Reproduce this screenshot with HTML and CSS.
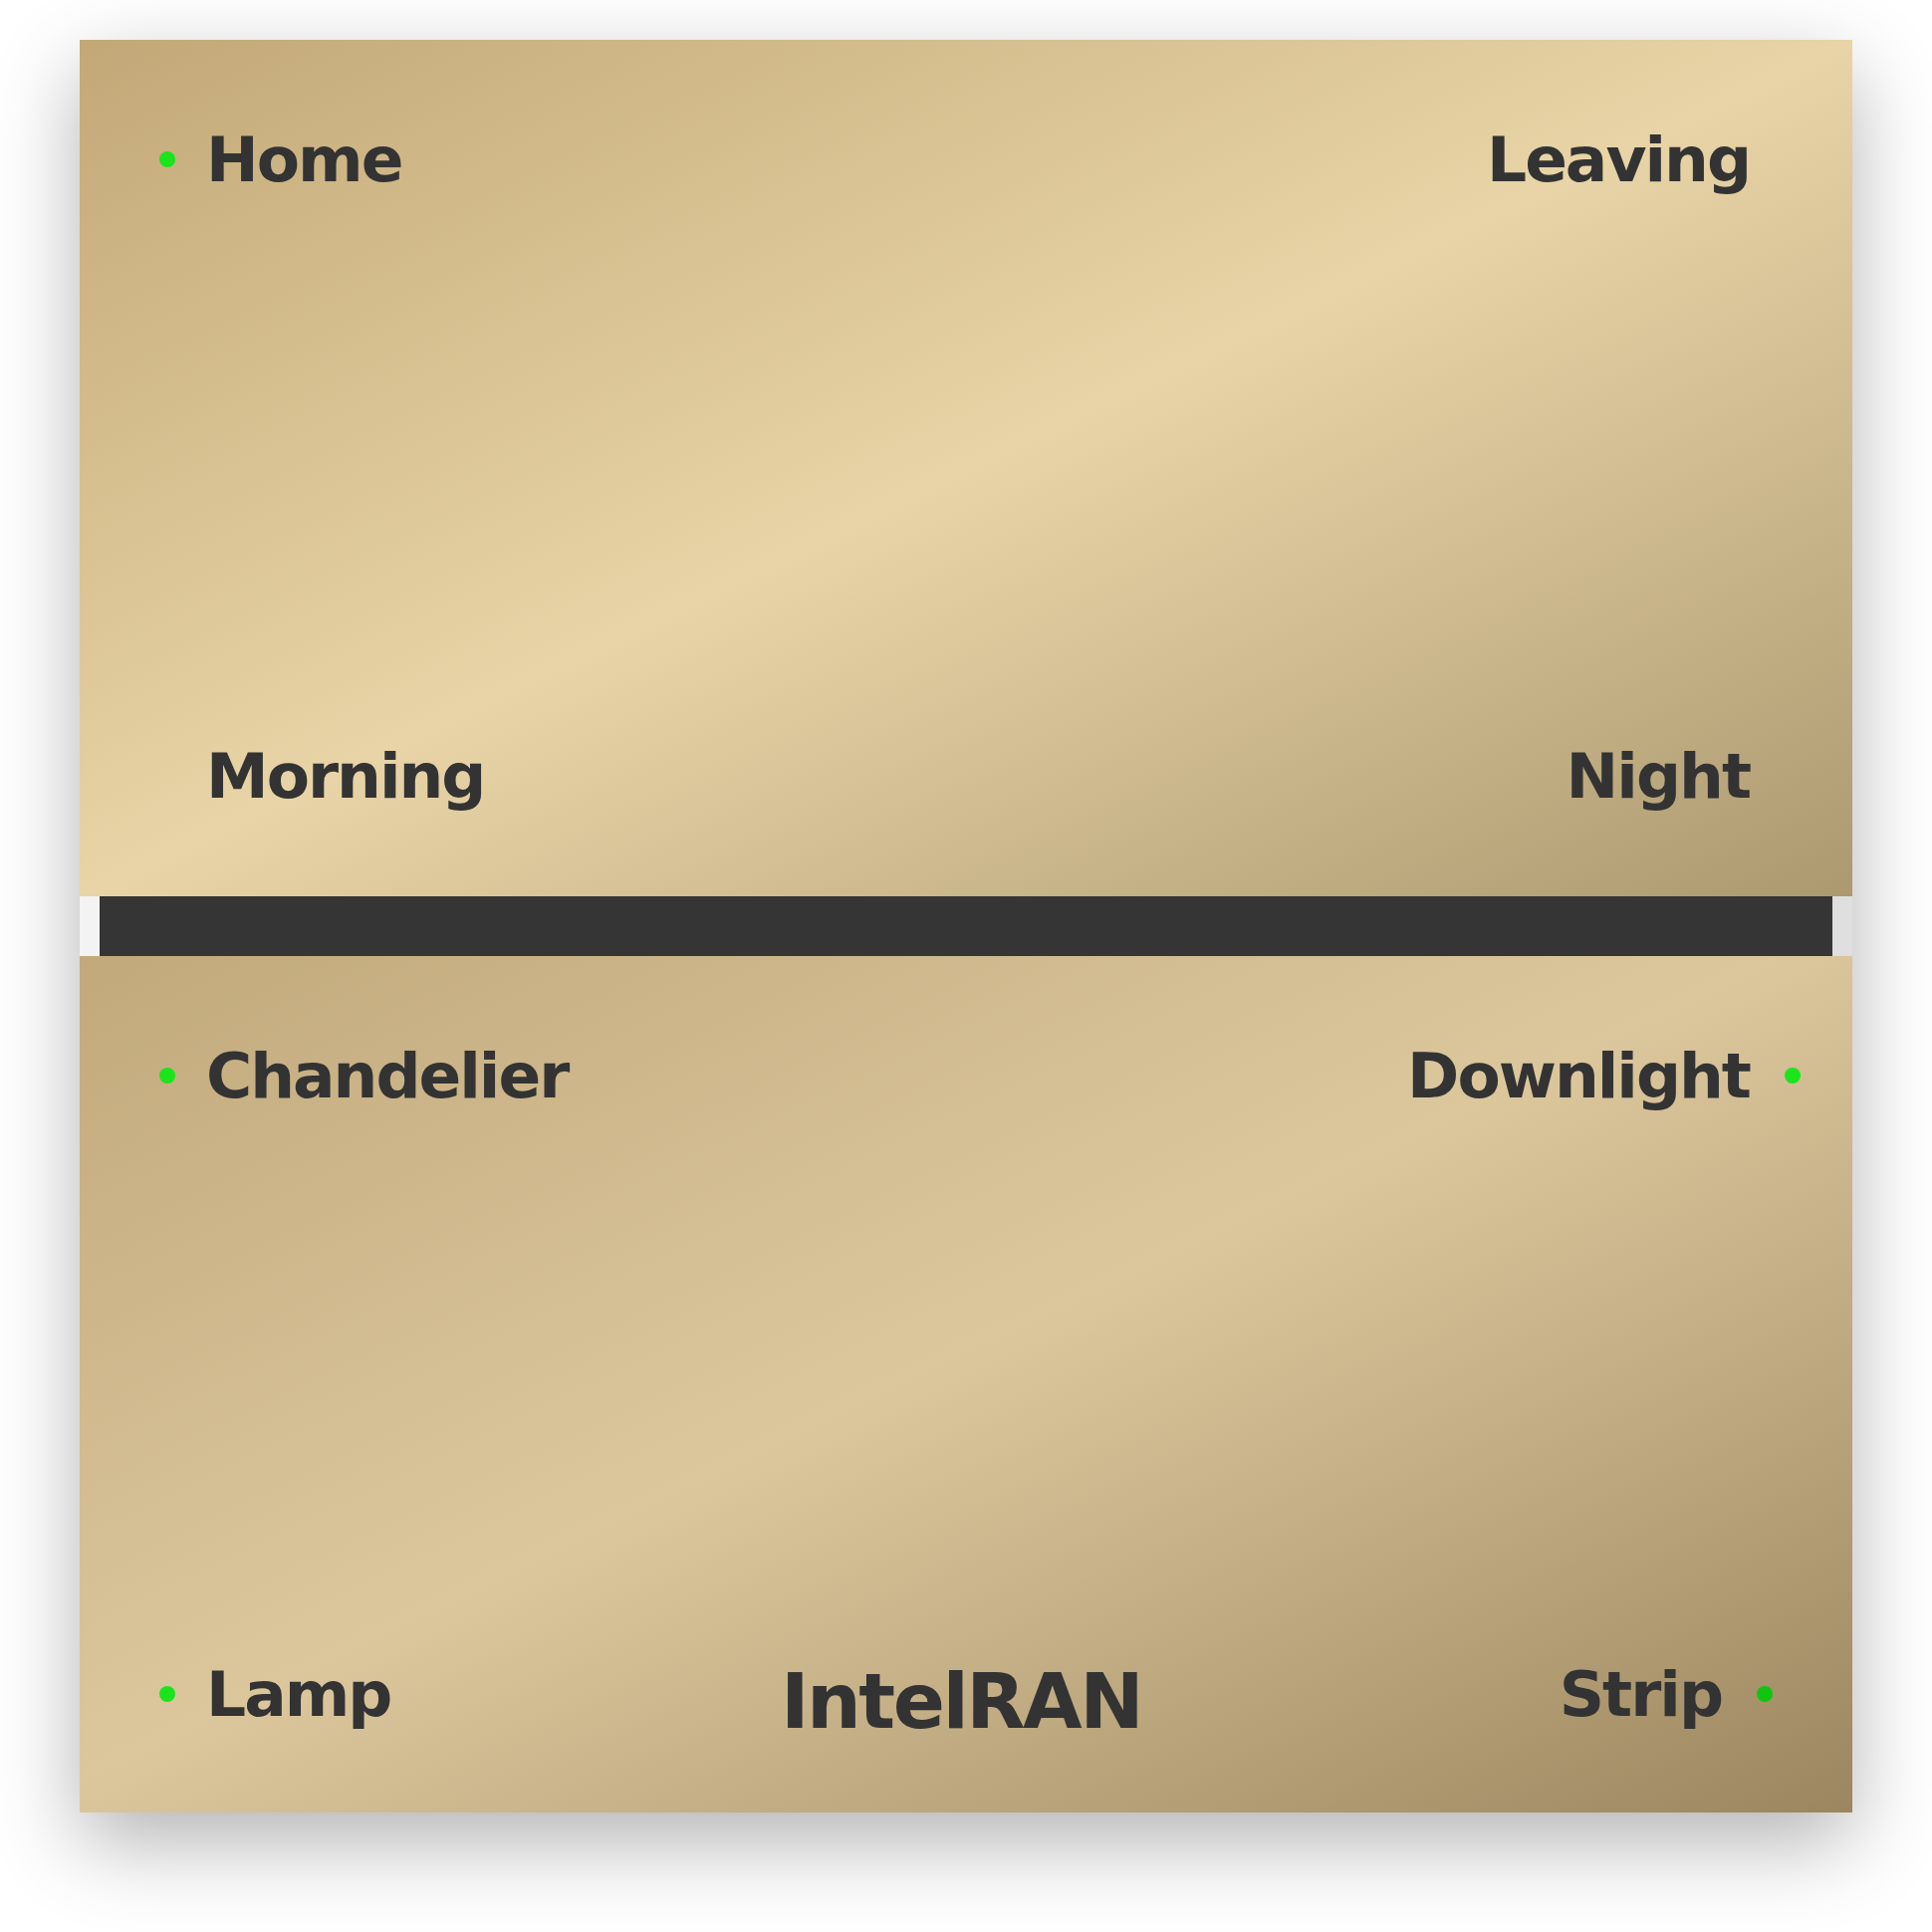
FILE: index.html
```html
<!DOCTYPE html>
<html lang="en">
<head>
    <meta charset="UTF-8">
    <meta name="viewport" content="width=device-width, initial-scale=1.0">
    <title>IntelRAN Switch Panel</title>
    <link rel="stylesheet" href="styles.css">
</head>
<body>
    <div class="switch">
        <!-- scene keys -->
        <section class="panel panel-scenes">
            <div class="row">
                <div class="key key-left"><span class="dot"></span><span class="label">Home</span></div>
                <div class="key key-right"><span class="label">Leaving</span><span class="dot dot-off"></span></div>
            </div>
            <div class="row">
                <div class="key key-left"><span class="dot dot-off"></span><span class="label">Morning</span></div>
                <div class="key key-right"><span class="label">Night</span><span class="dot dot-off"></span></div>
            </div>
        </section>

        <div class="divider">
            <div class="divider-bar"></div>
        </div>

        <!-- light keys -->
        <section class="panel panel-lights">
            <div class="row">
                <div class="key key-left"><span class="dot"></span><span class="label">Chandelier</span></div>
                <div class="key key-right"><span class="label">Downlight</span><span class="dot"></span></div>
            </div>
            <div class="row row-brand">
                <div class="key key-left"><span class="dot"></span><span class="label">Lamp</span></div>
                <div class="brand">IntelRAN</div>
                <div class="key key-right key-strip"><span class="label">Strip</span><span class="dot dot-dim"></span></div>
            </div>
        </section>
    </div>
</body>
</html>
```

FILE: styles.css
```css
* {
    margin: 0;
    padding: 0;
    box-sizing: border-box;
    font-family: "DejaVu Sans", "Liberation Sans", sans-serif;
}

body {
    background: #fff;
    color: #333;
    min-height: 100vh;
    padding: 40px 80px;
}

.switch {
    width: 1780px;
    box-shadow: 0 30px 80px rgba(0, 0, 0, 0.3);
}

.panel {
    height: 860px;
    display: flex;
    flex-direction: column;
    justify-content: space-between;
    padding: 89px 52px 89px;
}

.panel-scenes {
    background: linear-gradient(to bottom right, #c2a877 0%, #e8d4a6 50%, #ac9970 100%);
}

.panel-lights {
    padding-bottom: 73px;
    background: linear-gradient(to bottom right, #c1a97b 0%, #dcc79d 48%, #9b865f 100%);
}

.row {
    display: flex;
    justify-content: space-between;
    align-items: flex-start;
}

.row-brand {
    display: grid;
    grid-template-columns: 1fr auto 1fr;
}

.key {
    display: flex;
    align-items: center;
    gap: 35px;
}

.key-left {
    margin-left: 28px;
    gap: 31px;
}

.key-right {
    justify-self: end;
}

.key-strip {
    margin-right: 28px;
}

.label {
    font-size: 63px;
    font-weight: bold;
    line-height: 1;
    letter-spacing: -2px;
    color: #333;
}

.dot {
    width: 16px;
    height: 16px;
    border-radius: 50%;
    background: #1ce41c;
    margin-top: -2px;
}

.dot-off {
    visibility: hidden;
}

.dot-dim {
    background: #10c410;
}

.brand {
    font-size: 77px;
    font-weight: bold;
    line-height: 1;
    letter-spacing: -2.5px;
    color: #333;
    margin-left: -10px;
}

.divider {
    height: 60px;
    padding: 0 20px;
    background: linear-gradient(to right, #f3f3f3, #dfdfdf);
}

.divider-bar {
    height: 100%;
    background: #353535;
}
```
